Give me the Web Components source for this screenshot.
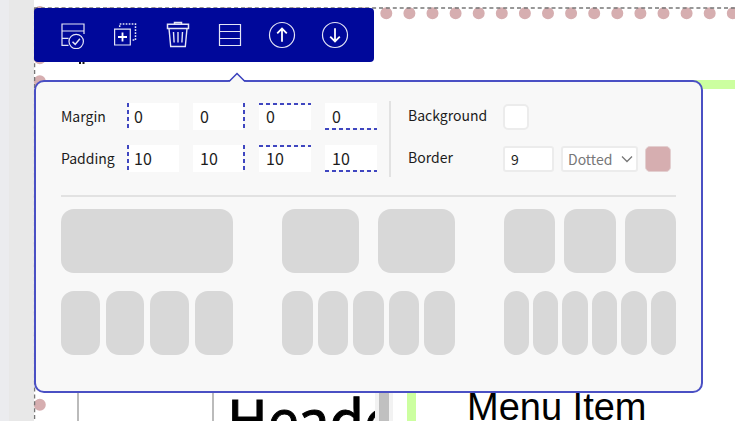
<!DOCTYPE html>
<html lang="en">
<head>
<meta charset="utf-8">
<title>Section editor</title>
<style>
    html, body {
        height: 100%;
        margin: 0;
    }

    body {
        --navy: #00089a;
        --outline: #4a50c4;
        --panel: #f8f8f8;
        --tile: #d8d8d8;
        --rose: #d6aeb0;
        --lime: #ccffa0;
        background: white;
        color: #1c1c1c;
        font-family: "Noto Sans CJK SC", "Noto Sans", sans-serif;
        overflow: hidden;
    }
</style>
</head>
<body>
<editor-workspace>
    <site-section>
        <site-preview></site-preview>
        <section-toolbar slot="overlay"></section-toolbar>
        <section-settings slot="overlay">
            <spacing-fields slot="spacing" label="Margin" value="0"></spacing-fields>
            <spacing-fields slot="spacing" label="Padding" value="10"></spacing-fields>
            <appearance-fields slot="appearance"></appearance-fields>
            <layout-choice columns="1" style="--gap: 0px"></layout-choice>
            <layout-choice columns="2" style="--gap: 19px"></layout-choice>
            <layout-choice columns="3" style="--gap: 9px"></layout-choice>
            <layout-choice columns="4" style="--gap: 6px"></layout-choice>
            <layout-choice columns="5" style="--gap: 5px"></layout-choice>
            <layout-choice columns="6" style="--gap: 4px"></layout-choice>
        </section-settings>
    </site-section>
</editor-workspace>

<script>
class EditorWorkspace extends HTMLElement {
    constructor() {
        super();
        this.attachShadow({mode: "open"});
        this.shadowRoot.innerHTML = `
            <style>
            :host {
                display: flex;
                height: 100%;
            }
            .edge {
                flex: 0 0 9px;
                background: #ebecef;
            }
            .rail {
                flex: 0 0 25px;
                background: #e8e8e8;
            }
            main {
                flex: 1;
                min-width: 0;
                padding-top: 7px;
                display: flex;
            }
            </style>
            <div class="edge"></div>
            <div class="rail"></div>
            <main><slot></slot></main>
        `;
    }
}

/* the selected section: dashed outline plus its own dotted border */
class SiteSection extends HTMLElement {
    constructor() {
        super();
        this.attachShadow({mode: "open"});
        this.shadowRoot.innerHTML = `
            <style>
            :host {
                display: block;
                position: relative;
                flex: 1;
                min-width: 0;
            }
            .frame {
                position: absolute;
                inset: 0;
                width: 100%;
                height: 100%;
                overflow: visible;
            }
            .dots {
                stroke: var(--rose);
                stroke-width: 12;
                stroke-linecap: round;
                stroke-dasharray: 0 23.1;
            }
            .outline {
                stroke: #777;
                stroke-width: 1.3;
                stroke-dasharray: 4 2.9;
            }
            </style>
            <svg class="frame" aria-hidden="true">
                <line class="dots" x1="5.8" y1="6.3" x2="100%" y2="6.3"/>
                <line class="dots" x1="5.8" y1="5" x2="5.8" y2="100%"/>
                <line class="outline" x1="0" y1="1" x2="100%" y2="1"/>
                <line class="outline" x1="0.6" y1="1" x2="0.6" y2="100%"/>
                <path d="M45 55h2v2h-2zM48.500 55h2v2h-2z" fill="#111"/>
            </svg>
            <slot></slot>
            <slot name="overlay"></slot>
        `;
    }
}

class SitePreview extends HTMLElement {
    constructor() {
        super();
        this.attachShadow({mode: "open"});
        this.shadowRoot.innerHTML = `
            <style>
            :host {
                display: flex;
                box-sizing: border-box;
                height: 100%;
                padding: 73px 0 0 43px;
                overflow: hidden;
            }
            .logo {
                flex: 0 0 133px;
                border-left: 2px solid #bbb;
            }
            .title {
                flex: 0 0 163px;
                box-sizing: border-box;
                border-left: 2px solid #bbb;
                padding: 291px 0 0 13px;
                overflow: hidden;
            }
            h1 {
                margin: 0;
                font-size: 56px;
                font-weight: 400;
                line-height: 92px;
                color: black;
                -webkit-text-stroke: 1px black;
            }
            .scroll {
                flex: 0 0 10px;
                border: solid #f2f2f2;
                border-width: 0 4px;
                background: #c0c0c0;
            }
            .menu {
                flex: 1;
                margin-left: 14px;
                border: solid var(--lime);
                border-width: 9px 0 0 9px;
                padding: 296px 0 0 51px;
                font: 38px/44px "Liberation Sans", Arial, sans-serif;
                color: black;
                white-space: nowrap;
            }
            </style>
            <div class="logo"></div>
            <div class="title"><h1>Header</h1></div>
            <div class="scroll"></div>
            <div class="menu">Menu Item</div>
        `;
    }
}

class SectionToolbar extends HTMLElement {
    constructor() {
        super();
        this.attachShadow({mode: "open"});
        this.shadowRoot.innerHTML = `
            <style>
            :host {
                position: absolute;
                top: 1px;
                left: 0;
                display: flex;
                box-sizing: border-box;
                width: 340px;
                padding: 0 13px;
                border-radius: 4px;
                background: var(--navy);
            }
            button {
                display: grid;
                place-items: center;
                flex: 1;
                height: 54px;
                margin: 0;
                padding: 0;
                border: 0;
                background: none;
                cursor: pointer;
            }
            svg {
                width: 28px;
                height: 28px;
                fill: none;
                stroke: #e4e5f6;
                stroke-width: 1.2;
            }
            .bold {
                stroke: white;
                stroke-width: 1.8;
            }
            </style>
            <button type="button" aria-label="Save section">
                <svg viewBox="0 0 28 28">
                    <path d="M9.500 24.300H3V3H25V13M3 10H25M3 17.300H9.500"/>
                    <circle cx="17.200" cy="20.500" r="7.200"/>
                    <path d="M13.500 20.800l2.700 2.600 4.700-5.600" stroke-width="1.500"/>
                </svg>
            </button>
            <button type="button" aria-label="Duplicate">
                <svg viewBox="0 0 28 28">
                    <path d="M3.600 8.200H19.300V24H3.600z"/>
                    <path d="M11.500 11.500v9M7 16h9" class="bold"/>
                    <path d="M8.700 6V3H24.500V19H20.500" stroke-dasharray="1.700 1.300" stroke-width="1.500"/>
                </svg>
            </button>
            <button type="button" aria-label="Delete">
                <svg viewBox="0 0 28 28">
                    <path d="M3.500 3.200H24.500V7.500H3.500zM10.500 3V1.500H17.500V3" stroke-width="1.500"/>
                    <path d="M5 7.500L6.700 25.500H21.300L23 7.500M9.500 11l.6 10.500M14 11v10.500M18.500 11l-.6 10.500" stroke-width="1.400"/>
                </svg>
            </button>
            <button type="button" aria-label="Rows">
                <svg viewBox="0 0 28 28">
                    <path d="M3.500 3.500H24.500V24.500H3.500zM3.500 10.500H24.500M3.500 17.500H24.500"/>
                </svg>
            </button>
            <button type="button" aria-label="Move up">
                <svg viewBox="0 0 28 28">
                    <circle cx="14" cy="14" r="12.500"/>
                    <path d="M14 20.800V8M9.200 12.300L14 7.500l4.800 4.800" class="bold"/>
                </svg>
            </button>
            <button type="button" aria-label="Move down">
                <svg viewBox="0 0 28 28">
                    <circle cx="14" cy="14" r="12.500"/>
                    <path d="M14 7.200V20M9.200 15.700L14 20.500l4.800-4.800" class="bold"/>
                </svg>
            </button>
        `;
    }
}

class SectionSettings extends HTMLElement {
    constructor() {
        super();
        this.attachShadow({mode: "open"});
        this.shadowRoot.innerHTML = `
            <style>
            :host {
                position: absolute;
                top: 73px;
                left: 0;
                right: 32px;
                box-sizing: border-box;
                padding: 19px 25px 36px;
                border: 2px solid var(--outline);
                border-radius: 10px;
                background: var(--panel);
            }
            .caret {
                position: absolute;
                top: -10px;
                left: 192px;
                width: 18px;
                height: 11px;
            }
            .fields {
                display: flex;
                padding-bottom: 18px;
                border-bottom: 2px solid #e2e2e2;
            }
            .spacing {
                display: grid;
                gap: 15px;
                padding: 2px 12px 5px 0;
                border-right: 2px solid #e2e2e2;
            }
            .appearance {
                flex: 1;
                padding: 3px 0 0 16px;
            }
            .layouts {
                display: grid;
                grid-template-columns: repeat(3, 1fr);
                gap: 18px 49px;
                padding-top: 12px;
            }
            </style>
            <svg class="caret" viewBox="0 0 18 11" aria-hidden="true">
                <path d="M0 9.500h1.500L9 2l7.500 7.500H18V11H0z" fill="#f8f8f8"/>
                <path d="M0 9h1.500L9 1.500 16.500 9H18" fill="none" stroke="#3a41bd" stroke-width="1.500"/>
            </svg>
            <div class="fields">
                <div class="spacing"><slot name="spacing"></slot></div>
                <div class="appearance"><slot name="appearance"></slot></div>
            </div>
            <div class="layouts"><slot></slot></div>
        `;
    }
}

/* one label with a number for each side; the dashes show which side */
class SpacingFields extends HTMLElement {
    constructor() {
        super();
        this.attachShadow({mode: "open"});
    }

    connectedCallback() {
        this.render();
    }

    render() {
        const label = this.getAttribute("label");
        const value = this.getAttribute("value");
        const inputs = ["left", "right", "top", "bottom"].map((side, i) => `
            <input type="text" inputmode="numeric" class="${side}" value="${value}"
                ${i === 0 ? 'id="first"' : ""} aria-label="${label} ${side}">
        `).join("");

        this.shadowRoot.innerHTML = `
            <style>
            :host {
                --ink: #3f46c0;
                --across: repeating-linear-gradient(90deg, var(--ink) 0 4px, var(--panel) 4px 7px);
                --down: repeating-linear-gradient(var(--ink) 0 4px, var(--panel) 4px 7px);
                display: grid;
                grid-template-columns: 52px repeat(4, 52px);
                column-gap: 14px;
                align-items: center;
            }
            label {
                font-size: 14px;
                line-height: 27px;
            }
            input {
                box-sizing: border-box;
                width: 100%;
                height: 27px;
                margin: 0;
                padding: 0 7px;
                border: 0;
                background-color: white;
                background-repeat: no-repeat;
                color: inherit;
                font: 16px/27px "Noto Sans CJK SC", "Noto Sans", sans-serif;
            }
            .left, .right {
                background-image: var(--down);
                background-size: 2px 100%;
            }
            .top, .bottom {
                background-image: var(--across);
                background-size: 100% 2px;
            }
            .right {
                background-position: right;
            }
            .bottom {
                background-position: bottom;
            }
            </style>
            <label for="first">${label}</label>
            ${inputs}
        `;
    }
}

class AppearanceFields extends HTMLElement {
    constructor() {
        super();
        this.attachShadow({mode: "open"});
        this.shadowRoot.innerHTML = `
            <style>
            :host {
                display: grid;
                grid-template-columns: 96px auto;
                row-gap: 16px;
                justify-content: start;
            }
            label {
                padding-left: 1px;
                font-size: 14px;
                line-height: 22px;
            }
            .controls {
                display: flex;
                gap: 7px;
            }
            button, input, select {
                box-sizing: border-box;
                height: 26px;
                margin: 0;
                border: 2px solid #ececec;
                border-radius: 3px;
                background: white;
                color: inherit;
                font: 14px/22px "Noto Sans CJK SC", "Noto Sans", sans-serif;
            }
            button {
                width: 26px;
                padding: 0;
                border-radius: 5px;
            }
            #border-color {
                background: var(--rose);
                border: 1px solid #e3cfd0;
            }
            input {
                width: 51px;
                padding: 0 6px;
            }
            .select {
                position: relative;
            }
            select {
                appearance: none;
                width: 77px;
                padding: 0 5px;
                color: #777;
            }
            .select svg {
                position: absolute;
                top: 9px;
                right: 5px;
                width: 12px;
                height: 8px;
                pointer-events: none;
            }
            </style>
            <label for="background">Background</label>
            <div class="controls">
                <button type="button" id="background"></button>
            </div>
            <label for="border">Border</label>
            <div class="controls">
                <input type="text" inputmode="numeric" id="border" value="9">
                <div class="select">
                    <select aria-label="Border style">
                        <option>Dotted</option>
                        <option>Dashed</option>
                        <option>Solid</option>
                    </select>
                    <svg viewBox="0 0 12 8" aria-hidden="true">
                        <path d="M1 1.500l5 5 5-5" fill="none" stroke="#777" stroke-width="1.300"/>
                    </svg>
                </div>
                <button type="button" id="border-color" aria-label="Border color"></button>
            </div>
        `;
    }
}

class LayoutChoice extends HTMLElement {
    constructor() {
        super();
        this.attachShadow({mode: "open"});
    }

    connectedCallback() {
        this.render();
    }

    render() {
        const columns = Number(this.getAttribute("columns"));

        this.shadowRoot.innerHTML = `
            <style>
            :host {
                display: block;
            }
            button {
                display: flex;
                gap: var(--gap);
                width: 100%;
                height: 64px;
                margin: 0;
                padding: 0;
                border: 0;
                background: none;
                cursor: pointer;
            }
            span {
                flex: 1;
                height: 100%;
                border-radius: 13px;
                background: var(--tile);
            }
            button:hover span {
                background: #c8c8c8;
            }
            </style>
            <button type="button" aria-label="${columns} columns">${"<span></span>".repeat(columns)}</button>
        `;
    }
}

customElements.define("editor-workspace", EditorWorkspace);
customElements.define("site-section", SiteSection);
customElements.define("site-preview", SitePreview);
customElements.define("section-toolbar", SectionToolbar);
customElements.define("section-settings", SectionSettings);
customElements.define("spacing-fields", SpacingFields);
customElements.define("appearance-fields", AppearanceFields);
customElements.define("layout-choice", LayoutChoice);
</script>
</body>
</html>
